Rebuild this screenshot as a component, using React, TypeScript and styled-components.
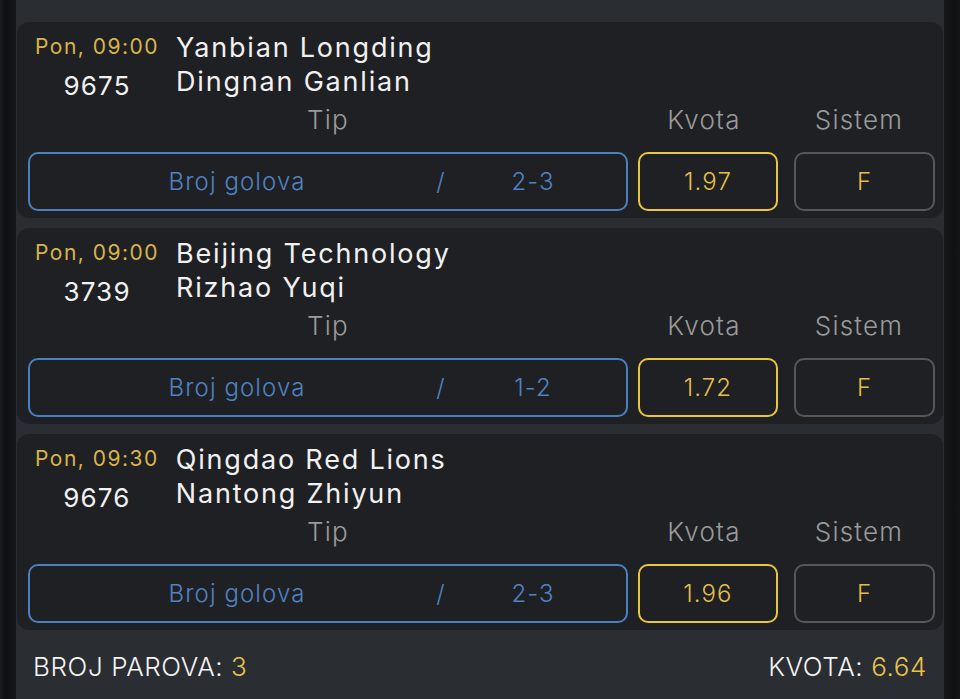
import React from "react";
import styled, { createGlobalStyle } from "styled-components";

const Global = createGlobalStyle`
  html, body { margin: 0; padding: 0; background: #141517; }
  body { font-family: Inter, "Noto Sans", sans-serif; font-weight: 300; }
  * { box-sizing: border-box; }
`;

const Screen = styled.div`
  display: flex;
  width: 960px;
  height: 699px;
  overflow: hidden;
  background: #141517;
`;

const Edge = styled.div<{ $side: "left" | "right" }>`
  width: 16px;
  flex: none;
  background: ${(p) =>
    p.$side === "left"
      ? "linear-gradient(90deg, #1b1c1e 0%, #0f1011 35%, #16171a 100%)"
      : "linear-gradient(90deg, #17181a 0%, #101112 60%, #141517 100%)"};
`;

const Panel = styled.div`
  flex: 1;
  background: #2a2d31;
  padding: 22px 1px 0 1px;
  display: flex;
  flex-direction: column;
  gap: 10px;
`;

const Card = styled.div`
  background: #1f2023;
  border-radius: 12px;
  padding: 9px 8px 7px 11px;
  display: flex;
  flex-direction: column;
`;

const Header = styled.div`
  display: flex;
  align-items: flex-start;
  gap: 17px;
  padding-left: 7px;
  height: 72px;
`;

const TimeCol = styled.div`
  display: flex;
  flex-direction: column;
  align-items: center;
  margin-top: 1px;
`;

const Time = styled.div`
  color: #d8b548;
  font-size: 21px;
  line-height: 30px;
  letter-spacing: 1.5px;
  font-weight: 400;
`;

const MatchId = styled.div`
  color: #f1f1f1;
  font-size: 26px;
  line-height: 34px;
  margin-top: 7px;
  letter-spacing: 1.2px;
  font-weight: 400;
`;

const Teams = styled.div`
  display: flex;
  flex-direction: column;
`;

const Team = styled.div`
  color: #f1f1f1;
  font-size: 27px;
  line-height: 34px;
  letter-spacing: 1.8px;
  font-weight: 400;
`;

const Row = styled.div<{ $top?: number }>`
  display: grid;
  grid-template-columns: 600px 10px 140px 16px 141px;
  margin-top: ${(p) => p.$top ?? 0}px;
`;

const Label = styled.div<{ $col: number; $nudge?: number }>`
  grid-column: ${(p) => p.$col};
  color: #9a9a9b;
  font-size: 26px;
  line-height: 34px;
  text-align: center;
  letter-spacing: 1.2px;
  padding-right: ${(p) => p.$nudge ?? 0}px;
`;

const Box = styled.div<{ $col: number; $tone: "blue" | "gold" | "gray" }>`
  grid-column: ${(p) => p.$col};
  height: 59px;
  border-radius: 10px;
  border: ${(p) => (p.$tone === "gold" ? 2.5 : 2)}px solid
    ${(p) =>
      p.$tone === "blue" ? "#4a7fc0" : p.$tone === "gold" ? "#eac53e" : "#55575b"};
  display: flex;
  align-items: center;
  justify-content: center;
  color: ${(p) => (p.$tone === "blue" ? "#4f83c3" : "#e3bf4a")};
  font-size: 24px;
  letter-spacing: 1.1px;
`;

const TipGrid = styled.div`
  width: 100%;
  display: grid;
  grid-template-columns: 404px 14px 1fr;
  align-items: center;
`;

const TipName = styled.span`
  text-align: center;
  padding-left: 10px;
`;

const Slash = styled.span`
  text-align: center;
`;

const TipValue = styled.span`
  text-align: center;
  padding-right: 8px;
`;

const Footer = styled.div`
  flex: 1;
  margin-top: -10px;
  display: flex;
  justify-content: space-between;
  align-items: center;
  padding: 4px 16px 0 16px;
  color: #f4f4f4;
  font-size: 26px;
  letter-spacing: 0.6px;
`;

const Gold = styled.span`
  color: #e8c34a;
`;

type Match = {
  time: string;
  id: string;
  home: string;
  away: string;
  tip: string;
  value: string;
  odd: string;
};

const matches: Match[] = [
  { time: "Pon, 09:00", id: "9675", home: "Yanbian Longding", away: "Dingnan Ganlian", tip: "Broj golova", value: "2-3", odd: "1.97" },
  { time: "Pon, 09:00", id: "3739", home: "Beijing Technology", away: "Rizhao Yuqi", tip: "Broj golova", value: "1-2", odd: "1.72" },
  { time: "Pon, 09:30", id: "9676", home: "Qingdao Red Lions", away: "Nantong Zhiyun", tip: "Broj golova", value: "2-3", odd: "1.96" },
];

export default function App() {
  return (
    <>
      <Global />
      <Screen>
        <Edge $side="left" />
        <Panel>
          {matches.map((m) => (
            <Card key={m.id}>
              <Header>
                <TimeCol>
                  <Time>{m.time}</Time>
                  <MatchId>{m.id}</MatchId>
                </TimeCol>
                <Teams>
                  <Team>{m.home}</Team>
                  <Team>{m.away}</Team>
                </Teams>
              </Header>
              <Row>
                <Label $col={1}>Tip</Label>
                <Label $col={3} $nudge={8}>Kvota</Label>
                <Label $col={5} $nudge={11}>Sistem</Label>
              </Row>
              <Row $top={15}>
                <Box $col={1} $tone="blue">
                  <TipGrid>
                    <TipName>{m.tip}</TipName>
                    <Slash>/</Slash>
                    <TipValue>{m.value}</TipValue>
                  </TipGrid>
                </Box>
                <Box $col={3} $tone="gold">{m.odd}</Box>
                <Box $col={5} $tone="gray">F</Box>
              </Row>
            </Card>
          ))}
          <Footer>
            <span>
              BROJ PAROVA: <Gold>3</Gold>
            </span>
            <span>
              KVOTA: <Gold>6.64</Gold>
            </span>
          </Footer>
        </Panel>
        <Edge $side="right" />
      </Screen>
    </>
  );
}
